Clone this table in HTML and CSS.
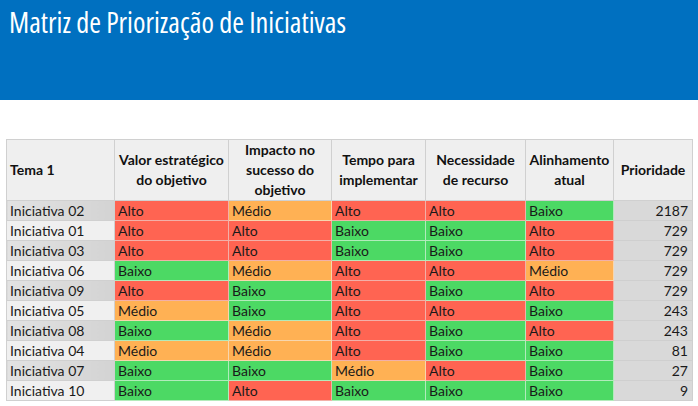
FILE: index.html
```html
<!DOCTYPE html>
<html lang="pt">
<head>
<meta charset="utf-8">
<title>Matriz de Priorização de Iniciativas</title>
<link rel="stylesheet" href="styles.css">
</head>
<body>
<header class="banner">
  <h1 class="title">Matriz de Priorização de Iniciativas</h1>
</header>
<main class="content">
  <table class="matrix">
    <colgroup>
      <col class="c1"><col class="c2"><col class="c3"><col class="c4"><col class="c5"><col class="c6"><col class="c7">
    </colgroup>
    <thead>
      <tr>
        <th class="th-left">Tema 1</th>
        <th>Valor estratégico do objetivo</th>
        <th>Impacto no sucesso do objetivo</th>
        <th>Tempo para implementar</th>
        <th>Necessidade de recurso</th>
        <th>Alinhamento atual</th>
        <th>Prioridade</th>
      </tr>
    </thead>
    <tbody>
      <tr class="dark"><td class="name">Iniciativa 02</td><td class="alto">Alto</td><td class="medio">Médio</td><td class="alto">Alto</td><td class="alto">Alto</td><td class="baixo">Baixo</td><td class="prio">2187</td></tr>
      <tr class="light"><td class="name">Iniciativa 01</td><td class="alto">Alto</td><td class="alto">Alto</td><td class="baixo">Baixo</td><td class="baixo">Baixo</td><td class="alto">Alto</td><td class="prio">729</td></tr>
      <tr class="dark"><td class="name">Iniciativa 03</td><td class="alto">Alto</td><td class="alto">Alto</td><td class="baixo">Baixo</td><td class="baixo">Baixo</td><td class="alto">Alto</td><td class="prio">729</td></tr>
      <tr class="light"><td class="name">Iniciativa 06</td><td class="baixo">Baixo</td><td class="medio">Médio</td><td class="alto">Alto</td><td class="alto">Alto</td><td class="medio">Médio</td><td class="prio">729</td></tr>
      <tr class="dark"><td class="name">Iniciativa 09</td><td class="alto">Alto</td><td class="baixo">Baixo</td><td class="alto">Alto</td><td class="baixo">Baixo</td><td class="alto">Alto</td><td class="prio">729</td></tr>
      <tr class="light"><td class="name">Iniciativa 05</td><td class="medio">Médio</td><td class="baixo">Baixo</td><td class="alto">Alto</td><td class="alto">Alto</td><td class="baixo">Baixo</td><td class="prio">243</td></tr>
      <tr class="dark"><td class="name">Iniciativa 08</td><td class="baixo">Baixo</td><td class="medio">Médio</td><td class="alto">Alto</td><td class="baixo">Baixo</td><td class="alto">Alto</td><td class="prio">243</td></tr>
      <tr class="light"><td class="name">Iniciativa 04</td><td class="medio">Médio</td><td class="medio">Médio</td><td class="alto">Alto</td><td class="baixo">Baixo</td><td class="baixo">Baixo</td><td class="prio">81</td></tr>
      <tr class="dark"><td class="name">Iniciativa 07</td><td class="baixo">Baixo</td><td class="baixo">Baixo</td><td class="medio">Médio</td><td class="alto">Alto</td><td class="baixo">Baixo</td><td class="prio">27</td></tr>
      <tr class="light"><td class="name">Iniciativa 10</td><td class="baixo">Baixo</td><td class="alto">Alto</td><td class="baixo">Baixo</td><td class="baixo">Baixo</td><td class="baixo">Baixo</td><td class="prio">9</td></tr>
    </tbody>
  </table>
</main>
</body>
</html>
```
FILE: styles.css
```css
html, body {
  margin: 0;
  padding: 0;
  background: #ffffff;
}
body {
  font-family: "Lato", "Open Sans", sans-serif;
  color: #1a1a1a;
}
.banner {
  background: #0070c0;
  height: 100px;
  box-sizing: border-box;
  padding: 4px 0 0 9px;
}
.title {
  margin: 0;
  font-family: "Open Sans", "Lato", sans-serif;
  font-stretch: 75%;
  font-weight: 400;
  font-size: 28.4px;
  line-height: 36px;
  color: #ffffff;
}
.content {
  padding: 39px 0 0 6px;
}
.matrix {
  border-collapse: collapse;
  table-layout: fixed;
  width: 686px;
  font-size: 14px;
}
.c1 { width: 108px; }
.c2 { width: 114px; }
.c3 { width: 103px; }
.c4 { width: 94px; }
.c5 { width: 100px; }
.c6 { width: 88px; }
.c7 { width: 79px; }
.matrix th {
  background: #efefef;
  border: 1px solid #d0d0d0;
  height: 59px;
  padding: 0 2px;
  font-weight: 700;
  font-size: 14px;
  line-height: 20px;
  text-align: center;
  vertical-align: middle;
  color: #111;
}
.matrix th.th-left {
  text-align: left;
  padding-left: 3px;
}
.matrix td {
  height: 19px;
  padding: 0 3px;
  border: 1px solid #d9d9d9;
  line-height: 19px;
  white-space: nowrap;
  overflow: hidden;
}
.matrix td.name {
  border-color: #d0d0d0;
}
.dark td.name {
  background: linear-gradient(to right, #e2e2e2, #d3d3d3);
}
.light td.name {
  background: #f0f0f0;
}
.matrix td.alto {
  background: #ff6452;
  border-color: #f2b0a8;
}
.matrix td.medio {
  background: #ffb154;
  border-color: #f7d6ae;
}
.matrix td.baixo {
  background: #4cd964;
  border-color: #b2ebbb;
}
.matrix td.prio {
  background: #d9d9d9;
  border-color: #cfcfcf;
  text-align: right;
  padding-right: 4px;
}
```
